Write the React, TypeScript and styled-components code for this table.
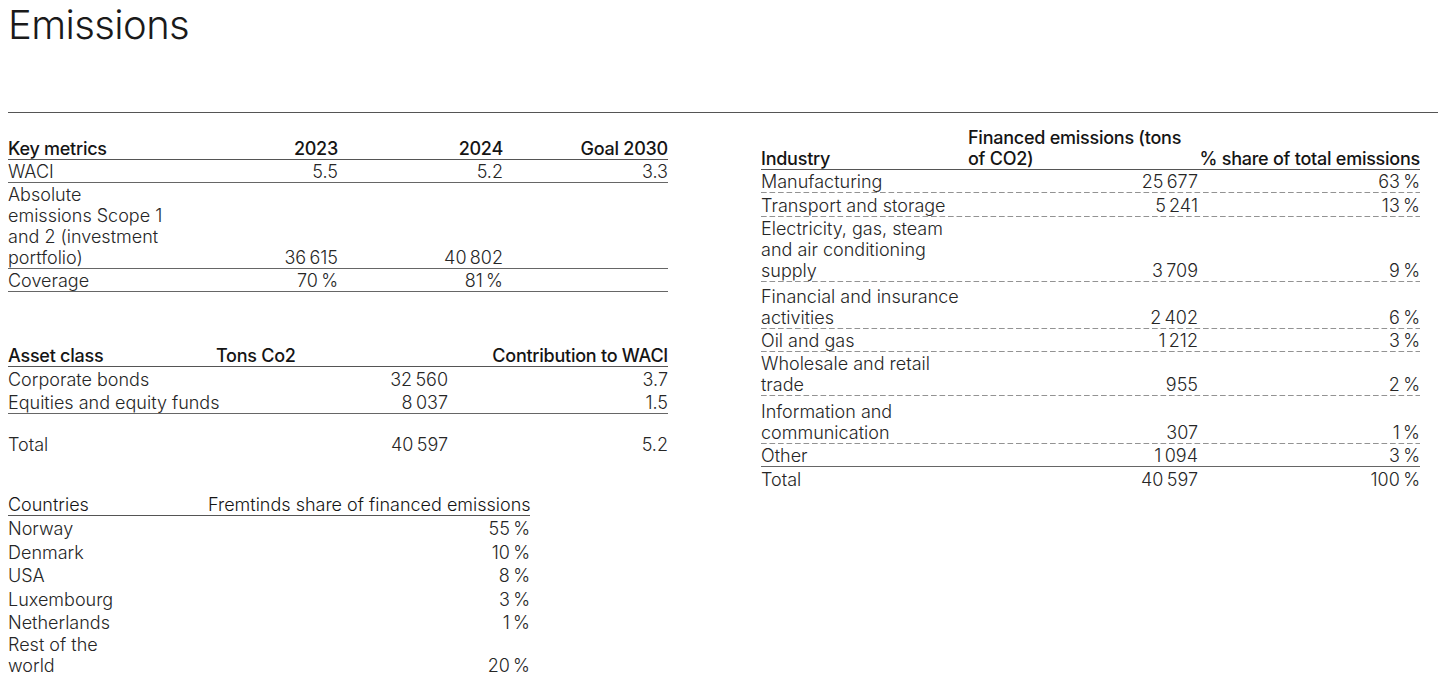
import styled, { createGlobalStyle, css } from "styled-components";
import React from "react";

const GlobalStyle = createGlobalStyle`
  html, body {
    margin: 0;
    padding: 0;
    background: #fff;
  }
  body {
    font-family: Inter, "Liberation Sans", sans-serif;
    color: #262626;
  }
`;

type Line = "solid" | "dashed" | "none";
type Align = "left" | "right";

const NB = "\u202F";

const Page = styled.div`
  width: 1440px;
  height: 688px;
  overflow: hidden;
  box-sizing: border-box;
  padding: 0 2px 0 8px;
`;

const Title = styled.h1`
  margin: 0;
  font-size: 40px;
  font-weight: 300;
  line-height: 50px;
  letter-spacing: -0.6px;
  color: #1a1a1a;
`;

const Rule = styled.hr`
  margin: 62px 0 0;
  height: 0;
  border: 0;
  border-top: 1px solid #555;
`;

const Columns = styled.div`
  display: flex;
  align-items: flex-start;
  gap: 93px;
`;

const Column = styled.div<{ $width: number; $top: number }>`
  width: ${(p) => p.$width}px;
  margin-top: ${(p) => p.$top}px;
  display: flex;
  flex-direction: column;
`;

const Table = styled.table<{ $width: number; $gap?: number }>`
  width: ${(p) => p.$width}px;
  margin-top: ${(p) => p.$gap ?? 0}px;
  border-collapse: collapse;
  table-layout: fixed;
  font-size: 18px;
  line-height: 21px;
`;

const Th = styled.th<{ $align?: Align; $light?: boolean }>`
  padding: 1px 0 0;
  text-align: ${(p) => p.$align ?? "right"};
  vertical-align: bottom;
  font-weight: ${(p) => (p.$light ? 300 : 500)};
  letter-spacing: ${(p) => (p.$light ? "0" : "-0.25px")};
  color: #151515;
  white-space: nowrap;
  border-bottom: 1px solid #555;
`;

const Td = styled.td<{ $align?: Align }>`
  text-align: ${(p) => p.$align ?? "right"};
  vertical-align: bottom;
  font-weight: 300;
  white-space: nowrap;
`;

const Row = styled.tr<{ $line?: Line; $pad?: number }>`
  & > td {
    padding: ${(p) => p.$pad ?? 1}px 0 ${(p) => (p.$line === "dashed" ? 1 : 0)}px;
    ${(p) =>
      p.$line === "solid" &&
      css`
        border-bottom: 1px solid #666;
      `}
  }
  ${(p) =>
    p.$line === "dashed" &&
    css`
      background: linear-gradient(to right, #939393 62%, transparent 0) left bottom / 8.5px 1px repeat-x;
    `}
`;

const CountryRow = styled.tr<{ $pad: number }>`
  & > td {
    padding: ${(p) => p.$pad}px 0 1px;
  }
`;

const Spacer = styled.tr`
  height: 19px;
`;

const Lines = ({ text }: { text: string[] }) => (
  <>
    {text.map((t, i) => (
      <React.Fragment key={i}>
        {i > 0 && <br />}
        {t}
      </React.Fragment>
    ))}
  </>
);

const keyMetrics = [
  { label: ["WACI"], values: ["5.5", "5.2", "3.3"] },
  {
    label: ["Absolute", "emissions Scope 1", "and 2 (investment", "portfolio)"],
    values: [`36${NB}615`, `40${NB}802`, ""],
  },
  { label: ["Coverage"], values: [`70${NB}%`, `81${NB}%`, ""] },
];

const countries = [
  { label: ["Norway"], share: `55${NB}%`, pad: 2.5 },
  { label: ["Denmark"], share: `10${NB}%`, pad: 1.5 },
  { label: ["USA"], share: `8${NB}%`, pad: 1.5 },
  { label: ["Luxembourg"], share: `3${NB}%`, pad: 1.5 },
  { label: ["Netherlands"], share: `1${NB}%`, pad: 1.5 },
  { label: ["Rest of the", "world"], share: `20${NB}%`, pad: 0 },
];

const industries: { label: string[]; tons: string; share: string; pad?: number }[] = [
  { label: ["Manufacturing"], tons: `25${NB}677`, share: `63${NB}%`, pad: 1 },
  { label: ["Transport and storage"], tons: `5${NB}241`, share: `13${NB}%`, pad: 2 },
  { label: ["Electricity, gas, steam", "and air conditioning", "supply"], tons: `3${NB}709`, share: `9${NB}%` },
  { label: ["Financial and insurance", "activities"], tons: `2${NB}402`, share: `6${NB}%`, pad: 4 },
  { label: ["Oil and gas"], tons: `1${NB}212`, share: `3${NB}%`, pad: 1 },
  { label: ["Wholesale and retail", "trade"], tons: "955", share: `2${NB}%` },
  { label: ["Information and", "communication"], tons: "307", share: `1${NB}%`, pad: 5 },
];

export default function App() {
  return (
    <Page>
      <GlobalStyle />
      <Title>Emissions</Title>
      <Rule />
      <Columns>
        <Column $width={660} $top={24}>
          <Table $width={660}>
            <colgroup>
              <col style={{ width: 165 }} />
              <col style={{ width: 165 }} />
              <col style={{ width: 165 }} />
              <col style={{ width: 165 }} />
            </colgroup>
            <thead>
              <tr>
                <Th $align="left">Key metrics</Th>
                <Th>2023</Th>
                <Th>2024</Th>
                <Th>Goal 2030</Th>
              </tr>
            </thead>
            <tbody>
              {keyMetrics.map((r) => (
                <Row key={r.label[0]} $line="solid">
                  <Td $align="left">
                    <Lines text={r.label} />
                  </Td>
                  {r.values.map((v, i) => (
                    <Td key={i}>{v}</Td>
                  ))}
                </Row>
              ))}
            </tbody>
          </Table>

          <Table $width={660} $gap={52}>
            <colgroup>
              <col style={{ width: 208 }} />
              <col style={{ width: 232 }} />
              <col style={{ width: 220 }} />
            </colgroup>
            <thead>
              <tr>
                <Th $align="left">Asset class</Th>
                <Th $align="left">Tons Co2</Th>
                <Th>Contribution to WACI</Th>
              </tr>
            </thead>
            <tbody>
              <Row $line="none" $pad={2}>
                <Td $align="left">Corporate bonds</Td>
                <Td>32{NB}560</Td>
                <Td>3.7</Td>
              </Row>
              <Row $line="solid" $pad={2}>
                <Td $align="left">Equities and equity funds</Td>
                <Td>8{NB}037</Td>
                <Td>1.5</Td>
              </Row>
              <Spacer />
              <Row $line="none">
                <Td $align="left">Total</Td>
                <Td>40{NB}597</Td>
                <Td>5.2</Td>
              </Row>
            </tbody>
          </Table>

          <Table $width={522} $gap={38}>
            <colgroup>
              <col style={{ width: 200 }} />
              <col style={{ width: 322 }} />
            </colgroup>
            <thead>
              <tr>
                <Th $align="left" $light>
                  Countries
                </Th>
                <Th $light>Fremtinds share of financed emissions</Th>
              </tr>
            </thead>
            <tbody>
              {countries.map((c) => (
                <CountryRow key={c.label[0]} $pad={c.pad}>
                  <Td $align="left">
                    <Lines text={c.label} />
                  </Td>
                  <Td>{c.share}</Td>
                </CountryRow>
              ))}
            </tbody>
          </Table>
        </Column>

        <Column $width={659} $top={13}>
          <Table $width={659}>
            <colgroup>
              <col style={{ width: 207 }} />
              <col style={{ width: 230 }} />
              <col style={{ width: 222 }} />
            </colgroup>
            <thead>
              <tr>
                <Th $align="left">Industry</Th>
                <Th $align="left">
                  Financed emissions (tons
                  <br />
                  of CO2)
                </Th>
                <Th>% share of total emissions</Th>
              </tr>
            </thead>
            <tbody>
              {industries.map((r) => (
                <Row key={r.label[0]} $line="dashed" $pad={r.pad}>
                  <Td $align="left">
                    <Lines text={r.label} />
                  </Td>
                  <Td>{r.tons}</Td>
                  <Td>{r.share}</Td>
                </Row>
              ))}
              <Row $line="solid" $pad={1}>
                <Td $align="left">Other</Td>
                <Td>1{NB}094</Td>
                <Td>3{NB}%</Td>
              </Row>
              <Row $line="none" $pad={2}>
                <Td $align="left">Total</Td>
                <Td>40{NB}597</Td>
                <Td>100{NB}%</Td>
              </Row>
            </tbody>
          </Table>
        </Column>
      </Columns>
    </Page>
  );
}
